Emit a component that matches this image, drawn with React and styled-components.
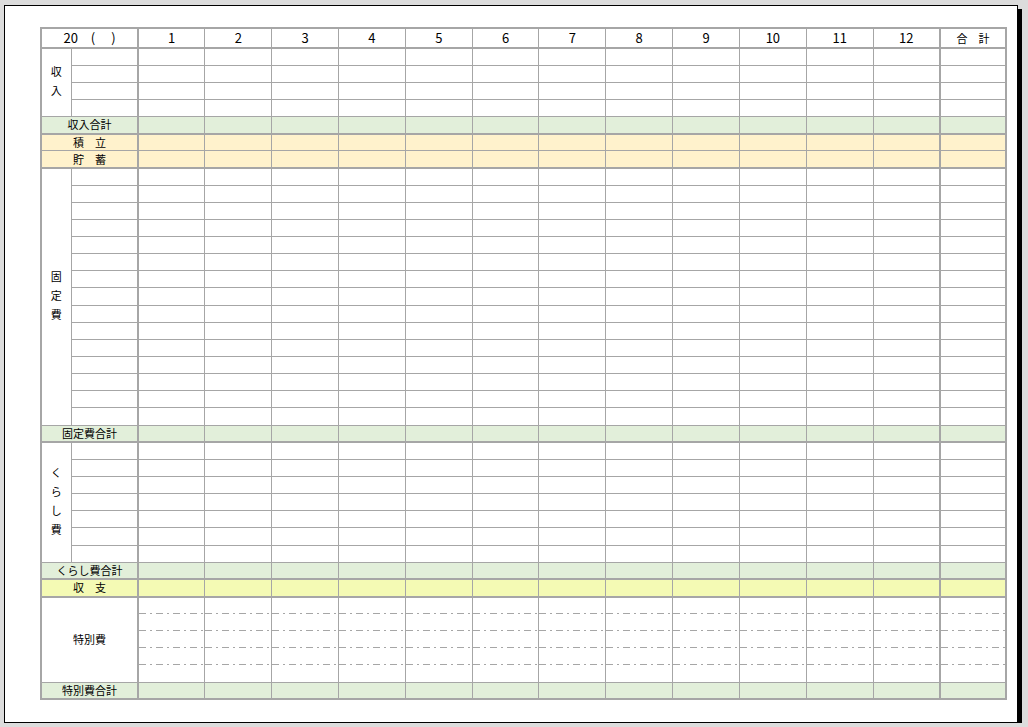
import React from "react";
import styled, { createGlobalStyle } from "styled-components";

const LINE = "#a6a6a6";
const THICK = `2px solid ${LINE}`;
const THIN = `1px solid ${LINE}`;

const FILLS = {
  plain: "#ffffff",
  total: "#e2efda",
  save: "#fff2cc",
  balance: "#f4fab4",
};

const MONTHS = [1, 2, 3, 4, 5, 6, 7, 8, 9, 10, 11, 12];

const GlobalStyle = createGlobalStyle`
  html, body {
    margin: 0;
    padding: 0;
    background: #dcdcdc;
  }
  body {
    font-family: "Noto Sans CJK JP", "Noto Sans", sans-serif;
  }
`;

const Desk = styled.div`
  padding: 5px 0 0 4px;
`;

const Page = styled.div`
  box-sizing: border-box;
  width: 1014px;
  height: 718px;
  padding: 21px 0 0 35px;
  background: #fff;
  border: 1px solid #000;
  box-shadow: 4px 4px 0 #000;
`;

const Sheet = styled.table`
  border-collapse: collapse;
  table-layout: fixed;
  width: 966px;
  border: ${THICK};
  font-family: "Noto Sans CJK JP", sans-serif;
  font-size: 11px;
  color: #000;
`;

const Col = styled.col`
  width: ${(p) => p.$w}px;
`;

const HeadRow = styled.tr`
  height: 20px;
  & > th {
    border-bottom: ${THICK};
  }
`;

const HeadCell = styled.th`
  padding: 0;
  border: ${THIN};
  border-left: ${(p) => (p.$edge ? THICK : THIN)};
  font-weight: normal;
  font-size: ${(p) => p.$size || 13}px;
  line-height: 18px;
  text-align: center;
  white-space: pre;
`;

const Row = styled.tr`
  height: 17.15px;
  background: ${(p) => FILLS[p.$fill || "plain"]};
  & > td {
    ${(p) => (p.$thickBelow ? `border-bottom: ${THICK};` : "")}
  }
`;

const Cell = styled.td`
  padding: 0;
  border: ${THIN};
  border-left: ${(p) => (p.$edge ? THICK : THIN)};
  ${(p) =>
    p.$dashed
      ? `
    border-bottom: hidden;
    background-image: repeating-linear-gradient(
      to right,
      ${LINE} 0 7px,
      transparent 7px 11px,
      ${LINE} 11px 13px,
      transparent 13px 17px
    );
    background-size: 100% 1px;
    background-repeat: no-repeat;
    background-position: left bottom;
  `
      : ""}
`;

const LabelCell = styled.td`
  padding: 0;
  border: ${THIN};
  text-align: center;
  vertical-align: middle;
  line-height: 15px;
  white-space: pre;
`;

const Stack = styled.div`
  display: flex;
  flex-direction: column;
  align-items: center;
  padding-bottom: 3px;
`;

const Char = styled.span`
  display: block;
  line-height: 19px;
`;

function VerticalLabel({ text }) {
  return (
    <Stack>
      {[...text].map((c, i) => (
        <Char key={i}>{c}</Char>
      ))}
    </Stack>
  );
}

function DataCells({ dashed }) {
  return (
    <>
      {MONTHS.map((m) => (
        <Cell key={m} $edge={m === 1} $dashed={dashed} />
      ))}
      <Cell $edge $dashed={dashed} />
    </>
  );
}

function Section({ label, rows }) {
  return Array.from({ length: rows }, (_, i) => (
    <Row key={i}>
      {i === 0 && (
        <LabelCell rowSpan={rows}>
          <VerticalLabel text={label} />
        </LabelCell>
      )}
      <Cell />
      <DataCells />
    </Row>
  ));
}

function SumRow({ label, fill = "total", thickBelow }) {
  return (
    <Row $fill={fill} $thickBelow={thickBelow}>
      <LabelCell colSpan={2}>{label}</LabelCell>
      <DataCells />
    </Row>
  );
}

function SpecialSection({ rows }) {
  return Array.from({ length: rows }, (_, i) => (
    <Row key={i}>
      {i === 0 && (
        <LabelCell colSpan={2} rowSpan={rows}>
          特別費
        </LabelCell>
      )}
      <DataCells dashed={i < rows - 1} />
    </Row>
  ));
}

export default function App() {
  return (
    <>
      <GlobalStyle />
      <Desk>
        <Page>
          <Sheet>
            <colgroup>
              <Col $w={30} />
              <Col $w={67} />
              {MONTHS.map((m) => (
                <Col key={m} $w={66.83} />
              ))}
              <Col $w={66} />
            </colgroup>
            <thead>
              <HeadRow>
                <HeadCell colSpan={2}>20　(　 )</HeadCell>
                {MONTHS.map((m) => (
                  <HeadCell key={m} $edge={m === 1}>
                    {m}
                  </HeadCell>
                ))}
                <HeadCell $edge $size={11}>
                  合　計
                </HeadCell>
              </HeadRow>
            </thead>
            <tbody>
              <Section label="収入" rows={4} />
              <SumRow label="収入合計" thickBelow />
              <SumRow label="積　立" fill="save" />
              <SumRow label="貯　蓄" fill="save" thickBelow />
              <Section label="固定費" rows={15} />
              <SumRow label="固定費合計" thickBelow />
              <Section label="くらし費" rows={7} />
              <SumRow label="くらし費合計" thickBelow />
              <SumRow label="収　支" fill="balance" thickBelow />
              <SpecialSection rows={5} />
              <SumRow label="特別費合計" />
            </tbody>
          </Sheet>
        </Page>
      </Desk>
    </>
  );
}
